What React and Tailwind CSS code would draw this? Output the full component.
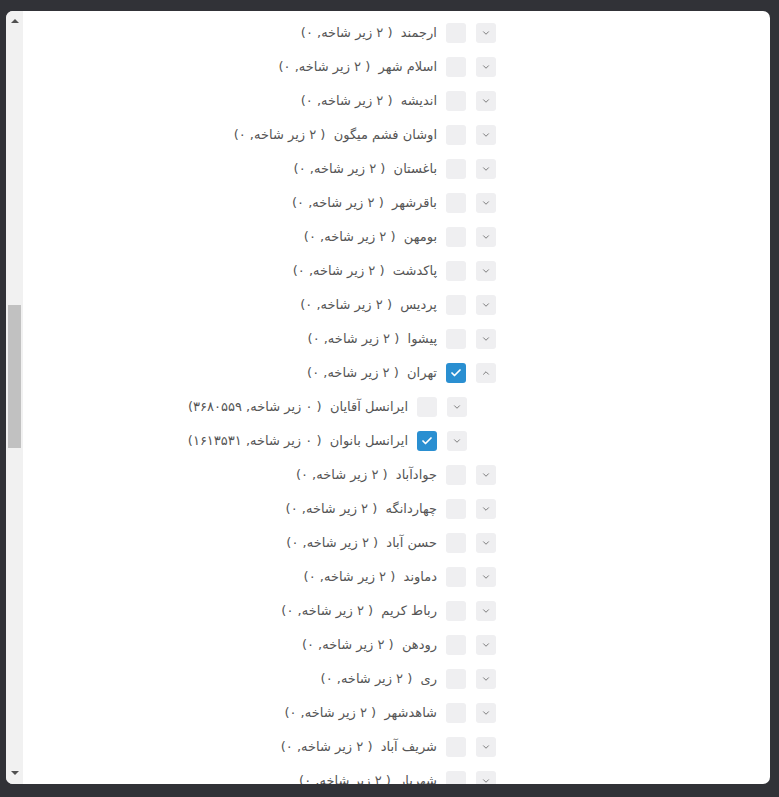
import { ChevronDown, ChevronUp, Check } from 'lucide-react';

const before = ['ارجمند', 'اسلام شهر', 'اندیشه', 'اوشان فشم میگون', 'باغستان', 'باقرشهر', 'بومهن', 'پاکدشت', 'پردیس', 'پیشوا'];
const after = ['جوادآباد', 'چهاردانگه', 'حسن آباد', 'دماوند', 'رباط کریم', 'رودهن', 'ری', 'شاهدشهر', 'شریف آباد', 'شهریار'];

const tree = [
  ...before.map((n) => ({ name: n, sub: '۲', count: '۰' })),
  {
    name: 'تهران', sub: '۲', count: '۰', checked: true, open: true,
    children: [
      { name: 'ایرانسل آقایان', sub: '۰', count: '۳۶۸۰۵۵۹' },
      { name: 'ایرانسل بانوان', sub: '۰', count: '۱۶۱۳۵۳۱', checked: true },
    ],
  },
  ...after.map((n) => ({ name: n, sub: '۲', count: '۰' })),
];

function Row({ node, child }) {
  return (
    <div className={`flex h-[34px] items-center gap-[10px] ${child ? 'mr-[29px]' : ''}`}>
      <button className="grid h-5 w-5 place-items-center rounded-[3px] bg-[#efeff1] text-[#666]">
        {node.open ? <ChevronUp size={10} strokeWidth={2} /> : <ChevronDown size={10} strokeWidth={2} />}
      </button>
      <span className={`grid h-5 w-5 place-items-center rounded-[3px] ${node.checked ? 'bg-[#2a8fd1] text-white' : 'bg-[#efeff1]'}`}>
        {node.checked && <Check size={12} strokeWidth={3.5} />}
      </span>
      <span className="-mr-px whitespace-pre text-[13px] text-[#555]">
        {node.name}{'  ( '}{node.sub}{' زیر شاخه, '}{node.count})
      </span>
    </div>
  );
}

export default function App() {
  return (
    <div className="h-[797px] overflow-hidden bg-[#313237] pl-[6px] pt-[11px]" style={{ fontFamily: '"DejaVu Sans", sans-serif' }}>
      <div className="flex h-[773px] w-[764px] overflow-hidden rounded-[7px] bg-white">
        <div className="flex w-[17px] flex-col bg-[#f1f1f1]">
          <div className="grid h-[17px] place-items-center pt-[2px]">
            <span className="h-0 w-0 border-x-[4px] border-b-[4px] border-x-transparent border-b-[#505050]" />
          </div>
          <div className="h-[277px]" />
          <div className="mx-[2px] h-[143px] bg-[#c1c1c1]" />
          <div className="flex-1" />
          <div className="grid h-[17px] place-items-center pb-[6px]">
            <span className="h-0 w-0 border-x-[4px] border-t-[4px] border-x-transparent border-t-[#505050]" />
          </div>
        </div>
        <div dir="rtl" className="flex-1 overflow-hidden pr-[274px] pt-[5px]">
          {tree.map((n) => (
            <div key={n.name}>
              <Row node={n} />
              {n.open && n.children.map((c) => <Row key={c.name} node={c} child />)}
            </div>
          ))}
        </div>
      </div>
    </div>
  );
}
